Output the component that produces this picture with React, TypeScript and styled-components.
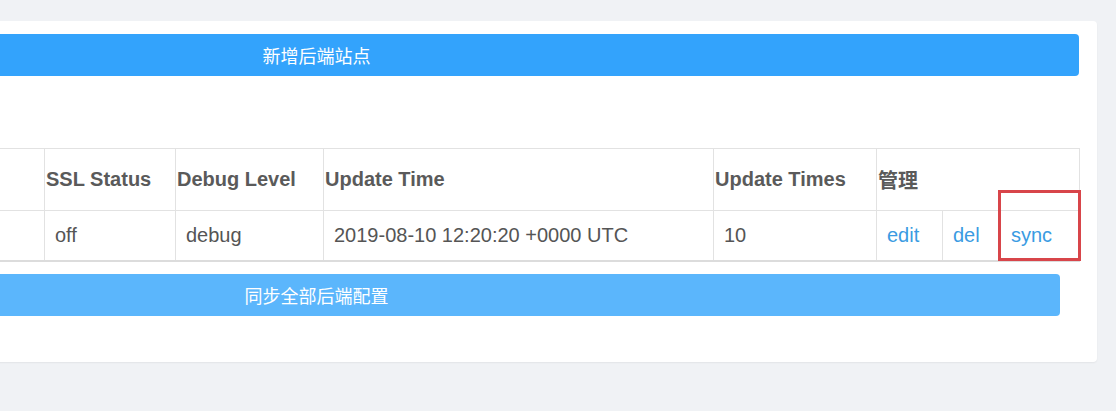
import React from "react";
import styled, { createGlobalStyle } from "styled-components";

const GlobalStyle = createGlobalStyle`
  html, body {
    margin: 0;
    padding: 0;
    background: #f0f2f5;
    overflow: hidden;
  }
  body {
    font-family: "Liberation Sans", Arial, "Noto Sans CJK SC", sans-serif;
  }
`;

const Page = styled.div`
  display: flex;
  align-items: flex-start;
  padding-top: 21px;
  height: 411px;
  box-sizing: border-box;
`;

const Panel = styled.section`
  flex-shrink: 0;
  margin-left: -464px;
  width: 1561px;
  box-sizing: border-box;
  padding: 13px 18px 46px 18px;
  background: #ffffff;
  border-radius: 4px;
  box-shadow: 0 1px 2px rgba(0, 0, 0, 0.06);
  display: flex;
  flex-direction: column;
  align-items: stretch;
`;

const ActionButton = styled.button<{ $tone: "primary" | "light"; $inset?: number }>`
  height: 42px;
  margin: 0 ${(p) => p.$inset ?? 0}px;
  border: none;
  border-radius: 4px;
  background: ${(p) => (p.$tone === "primary" ? "#33a3fc" : "#5bb6fc")};
  color: #ffffff;
  font-family: "Noto Sans CJK SC", "Liberation Sans", sans-serif;
  font-size: 18px;
  line-height: 42px;
  padding: 0;
  text-align: center;
  cursor: pointer;
`;

const TableWrap = styled.div`
  margin-top: 72px;
  margin-bottom: 12px;
`;

const Table = styled.table`
  width: 1525px;
  table-layout: fixed;
  border-collapse: collapse;
  border-bottom: 2px solid #dcdcdc;
  font-size: 20px;
  color: #555555;
`;

const HeadCell = styled.th`
  height: 61px;
  padding: 0 0 0 1px;
  border: 1px solid #e2e2e2;
  text-align: left;
  vertical-align: middle;
  font-weight: bold;
  color: #5a5a5a;
  white-space: nowrap;
  overflow: hidden;
`;

const BodyCell = styled.td<{ $link?: boolean }>`
  position: relative;
  height: 49px;
  padding: 0 0 0 10px;
  border: 1px solid #e2e2e2;
  border-bottom: none;
  vertical-align: middle;
  white-space: nowrap;
  color: ${(p) => (p.$link ? "#3a9be2" : "#555555")};
`;

const Link = styled.a`
  color: inherit;
  text-decoration: none;
  cursor: pointer;
`;

const Highlight = styled.span`
  position: absolute;
  left: -3px;
  top: -21px;
  right: -2px;
  bottom: -1px;
  border: 3px solid #d8454a;
  pointer-events: none;
`;

const widths = [200, 290, 131, 148, 390, 163, 66, 58, 79];

export default function App() {
  return (
    <>
      <GlobalStyle />
      <Page>
        <Panel>
          <ActionButton $tone="primary">新增后端站点</ActionButton>
          <TableWrap>
            <Table>
              <colgroup>
                {widths.map((w, i) => (
                  <col key={i} style={{ width: w }} />
                ))}
              </colgroup>
              <thead>
                <tr>
                  <HeadCell />
                  <HeadCell />
                  <HeadCell>SSL Status</HeadCell>
                  <HeadCell>Debug Level</HeadCell>
                  <HeadCell>Update Time</HeadCell>
                  <HeadCell>Update Times</HeadCell>
                  <HeadCell colSpan={3}>管理</HeadCell>
                </tr>
              </thead>
              <tbody>
                <tr>
                  <BodyCell />
                  <BodyCell />
                  <BodyCell>off</BodyCell>
                  <BodyCell>debug</BodyCell>
                  <BodyCell>2019-08-10 12:20:20 +0000 UTC</BodyCell>
                  <BodyCell>10</BodyCell>
                  <BodyCell $link>
                    <Link>edit</Link>
                  </BodyCell>
                  <BodyCell $link>
                    <Link>del</Link>
                  </BodyCell>
                  <BodyCell $link>
                    <Link>sync</Link>
                    <Highlight />
                  </BodyCell>
                </tr>
              </tbody>
            </Table>
          </TableWrap>
          <ActionButton $tone="light" $inset={19}>
            同步全部后端配置
          </ActionButton>
        </Panel>
      </Page>
    </>
  );
}
